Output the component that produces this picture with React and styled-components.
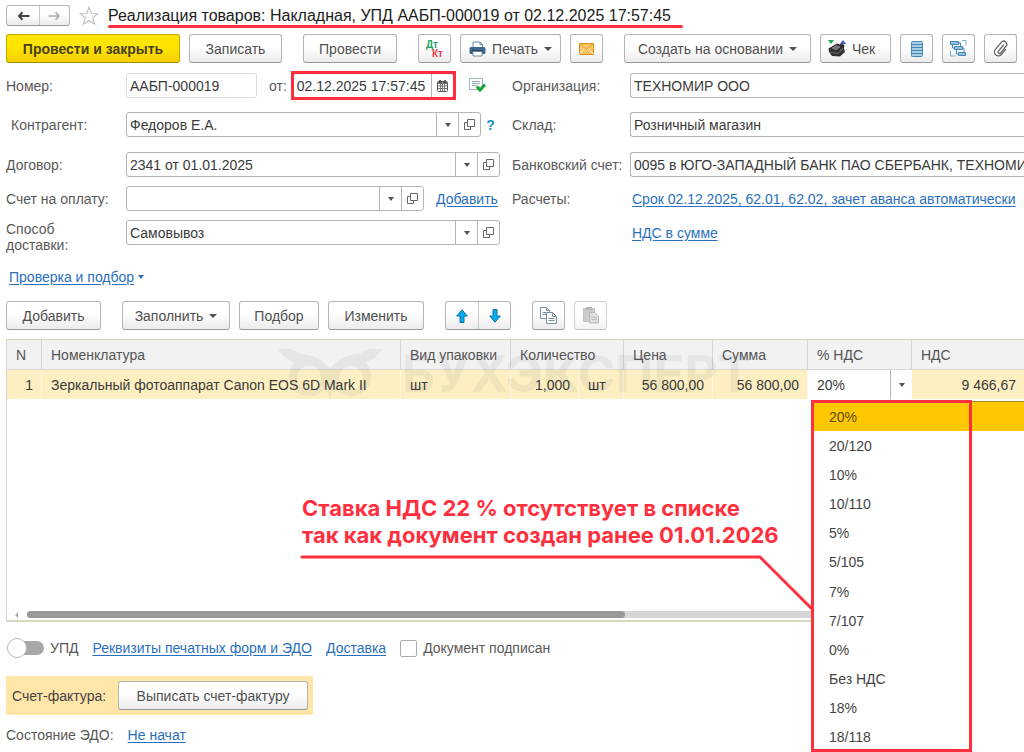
import React from "react";
import styled, { createGlobalStyle, css } from "styled-components";

const RED = "#ff2f3e";
const LINE = "#b4b4b4";
const LINK = "#2a6fbf";

const Global = createGlobalStyle`
  *, *::before, *::after { box-sizing: border-box; }
  body {
    margin: 0;
    background: #fff;
    color: #404040;
    font-family: "Liberation Sans", Arial, sans-serif;
    font-size: 14px;
    line-height: 16px;
  }
  button, input { font: inherit; color: inherit; }
`;

const Page = styled.main`
  min-height: 100vh;
  padding: 5px 0 8px 6px;
  overflow: hidden;
`;

const TitleBar = styled.header`
  display: flex;
  align-items: center;
  gap: 9px;
  height: 21px;
`;

const Title = styled.h1`
  position: relative;
  margin: 0;
  padding-right: 12px;
  color: #1c1c1c;
  font-size: 16px;
  font-weight: 400;
  line-height: 21px;
  white-space: nowrap;

  &::after {
    content: "";
    position: absolute;
    left: 0;
    right: 0;
    top: 20px;
    height: 3px;
    border-radius: 2px;
    background: ${RED};
  }
`;

const ButtonPair = styled.div`
  display: flex;
  flex: none;
  border: 1px solid ${LINE};
  border-bottom-color: #999;
  border-radius: 3px;
  background: linear-gradient(#fff 45%, #ebebeb);

  button + button { border-left: 1px solid #c8c8c8; }
`;

const PairButton = styled.button`
  display: grid;
  place-items: center;
  width: ${(p) => p.$w}px;
  height: ${(p) => p.$h}px;
  padding: 0;
  border: 0;
  background: none;
`;

const Toolbar = styled.div`
  display: flex;
  align-items: center;
  gap: 21px;
  margin-top: ${(p) => p.$top}px;
`;

const ToolGroup = styled.div`
  display: flex;
  gap: 9px;
`;

const Button = styled.button`
  display: flex;
  flex: none;
  align-items: center;
  justify-content: ${(p) => (p.$start ? "flex-start" : "center")};
  gap: 6px;
  width: ${(p) => p.$w}px;
  height: 29px;
  padding: 0 ${(p) => (p.$start ? 7 : 0)}px;
  border: 1px solid ${LINE};
  border-bottom-color: #999;
  border-radius: 3px;
  background: linear-gradient(#fff 45%, #ebebeb);
  color: #505050;
  white-space: nowrap;
  opacity: ${(p) => (p.disabled ? 0.6 : 1)};

  ${(p) =>
    p.$primary &&
    css`
      border-color: #c9a800;
      border-bottom-color: #a98d00;
      background: linear-gradient(#ffe600 40%, #f5cf00);
      color: #474020;
      font-weight: 700;
    `}
`;

const Caret = styled.span`
  border: 4px solid transparent;
  border-top-color: currentColor;
  border-bottom: 0;
`;

const SmallCaret = styled(Caret)`
  border-width: 3px;
  border-top-width: 4px;
  border-bottom: 0;
`;

const Form = styled.div`
  display: grid;
  grid-template-columns: 120px 374px 130px minmax(0, 1fr);
  grid-template-rows: 39px 40px 34px 34px 34px;
  margin-top: 10px;
`;

const Label = styled.label`
  display: flex;
  align-items: center;
  height: ${(p) => (p.$tall ? 33 : 25)}px;
  padding-left: ${(p) => p.$indent || 0}px;
  color: #595959;
  white-space: ${(p) => (p.$tall ? "normal" : "nowrap")};
`;

const Cell = styled.div`
  display: flex;
  align-items: center;
  height: 25px;
`;

const Field = styled.div`
  position: relative;
  display: flex;
  flex: ${(p) => (p.$w ? "none" : "1 1 0")};
  width: ${(p) => (p.$w ? `${p.$w}px` : "auto")};
  height: 25px;
  border: 1px solid ${(p) => (p.$soft ? "#dcdcdc" : LINE)};
  border-radius: 3px;
  background: #fff;

  ${(p) =>
    p.$open &&
    css`
      border-right: 0;
      border-radius: 3px 0 0 3px;

      input { padding-right: 0; }
    `}
`;

const Input = styled.input`
  flex: 1;
  min-width: 0;
  height: 100%;
  padding: 0 3px;
  border: 0;
  outline: 0;
  background: none;
  color: #3a3a3a;
`;

const FieldButton = styled.button`
  display: grid;
  flex: none;
  place-items: center;
  width: 22px;
  padding: 0;
  border: 0;
  border-left: 1px solid ${LINE};
  background: none;
  color: #505050;
`;

const Highlight = styled.span`
  position: absolute;
  inset: -3px;
  border: 3px solid ${RED};
  pointer-events: none;
`;

const FromLabel = styled.label`
  margin-left: 12px;
  margin-right: 6px;
  color: #595959;
`;

const Posted = styled.span`
  display: flex;
  margin-left: 15px;
`;

const Help = styled.button`
  width: 20px;
  padding: 0;
  border: 0;
  background: none;
  color: #1a93c8;
  font-weight: 700;
`;

const Link = styled.a`
  color: ${LINK};
  text-decoration: underline;
  text-underline-offset: 2px;
  white-space: nowrap;
  margin-left: ${(p) => p.$ml || 0}px;
`;

const CheckLine = styled.div`
  display: flex;
  align-items: center;
  gap: 4px;
  margin: 15px 0 0 3px;
  color: ${LINK};
`;

const TableBox = styled.section`
  position: relative;
  min-height: 283px;
  margin-top: 9px;
  border: 1px solid #d9d6c3;
  border-width: 1px 0 2px 1px;
`;

const Table = styled.table`
  width: 100%;
  border-collapse: separate;
  border-spacing: 0;
  table-layout: fixed;
`;

const Th = styled.th`
  height: 30px;
  padding: 0 8px 0 9px;
  border-right: 1px solid #d6d6d6;
  border-bottom: 1px solid #d6d6d6;
  background: #f2f2f2;
  color: #555;
  font-weight: 400;
  text-align: left;
  white-space: nowrap;

  &:last-child { border-right: 0; }
`;

const Td = styled.td`
  position: relative;
  height: 29px;
  padding: 0 8px 0 9px;
  border-right: 1px solid #fdf7e2;
  background: #fdefc1;
  color: #3a3a3a;
  text-align: ${(p) => (p.$num ? "right" : "left")};
  white-space: nowrap;

  &:last-child { border-right: 0; }
`;

const EditTd = styled(Td)`
  padding: 0;
  border: 0;
  background: #fff;
`;

const CellEditor = styled.div`
  display: flex;
  height: 29px;

  input { padding: 0 9px; }
`;

const Menu = styled.ul`
  position: absolute;
  z-index: 2;
  top: 31px;
  left: 4px;
  right: -113px;
  display: grid;
  grid-auto-rows: 1fr;
  height: 351px;
  margin: 0;
  padding: 0;
  border-left: 1px solid #aaa;
  border-top: 1px solid #a08a30;
  background: #fff;
  list-style: none;
`;

const Option = styled.li`
  display: flex;
  align-items: center;
  padding-left: 16px;
  background: ${(p) => (p["aria-selected"] ? "#ffc800" : "#fff")};
  color: ${(p) => (p["aria-selected"] ? "#5c4a10" : "#444")};
`;

const MenuFrame = styled.span`
  position: absolute;
  z-index: 3;
  top: 30px;
  left: 3px;
  width: 161px;
  height: 352px;
  border: 3px solid ${RED};
  pointer-events: none;
`;

const Watermark = styled.div`
  position: absolute;
  z-index: 1;
  top: 8px;
  left: 271px;
  display: flex;
  align-items: flex-start;
  gap: 20px;
  color: #23305a;
  font-family: Inter, sans-serif;
  font-size: 51px;
  font-weight: 700;
  line-height: 52px;
  opacity: 0.06;
  pointer-events: none;
`;

const Callout = styled.div`
  position: absolute;
  z-index: 3;
  top: 155px;
  left: 295px;
  color: ${RED};
  font-family: Inter, sans-serif;
  font-size: 22px;
  font-weight: 700;
  line-height: 27px;
  white-space: nowrap;

  p { margin: 0; }
  svg { display: block; margin-top: 6px; margin-left: -2px; }
`;

const ScrollBar = styled.div`
  position: absolute;
  left: 0;
  right: 0;
  bottom: 2px;
  display: flex;
  align-items: center;
  padding-left: 8px;
  gap: 9px;
`;

const ScrollArrow = styled.span`
  border: 3px solid transparent;
  border-right-color: #aaa;
  border-left: 0;
`;

const Track = styled.div`
  flex: 1;
  height: 7px;
  border-radius: 4px;
  background: #d6d6d6;
`;

const Thumb = styled.div`
  width: 60%;
  height: 7px;
  border-radius: 4px;
  background: #999;
`;

const OptionsLine = styled.div`
  display: flex;
  align-items: center;
  gap: 14px;
  height: 22px;
  margin-top: 15px;
`;

const CheckLabel = styled.label`
  display: flex;
  align-items: center;
  gap: 6px;
  color: #595959;
`;

const Switch = styled.input`
  position: relative;
  appearance: none;
  width: 38px;
  height: 22px;
  margin: 0;

  &::before {
    content: "";
    position: absolute;
    inset: 4px 0 4px 8px;
    border-radius: 7px;
    background: #a8a8a8;
  }
  &::after {
    content: "";
    position: absolute;
    top: 1px;
    left: 1px;
    width: 20px;
    height: 20px;
    border: 1px solid #b8b8b8;
    border-radius: 50%;
    background: #fff;
  }
`;

const Checkbox = styled.input`
  appearance: none;
  width: 17px;
  height: 17px;
  margin: 0;
  border: 1px solid #aaa;
  border-radius: 2px;
  background: #fff;
`;

const Invoice = styled.div`
  display: flex;
  align-items: center;
  gap: 12px;
  width: fit-content;
  margin-top: 17px;
  padding: 5px 5px 5px 6px;
  background: #ffe5a8;
  color: #444;
`;

const Status = styled.div`
  display: flex;
  gap: 14px;
  margin-top: 12px;
  color: #595959;
`;

/* ---------- icons ---------- */

const Arrow = ({ back }) => (
  <svg width="13" height="10" viewBox="0 0 13 10" fill="none" stroke={back ? "#444" : "#aaa"} strokeWidth={back ? 2 : 1.6}>
    <path d={back ? "M12.500 5H2M5.500 1.300L2 5l3.500 3.700" : "M.5 5H11M7.500 1.300L11 5 7.500 8.700"} />
  </svg>
);

const Star = () => (
  <svg width="20" height="20" viewBox="0 0 20 20" fill="#fff" stroke="#b9bec6" strokeWidth="1.1">
    <path d="M10 1.200l2.300 6.300 6.700.2-5.300 4.100 1.900 6.500L10 14.500l-5.600 3.800 1.900-6.500L1 7.700l6.700-.2z" />
  </svg>
);

const DtKt = () => (
  <svg width="20" height="18" viewBox="0 0 20 18" fontFamily="Liberation Sans, sans-serif" fontWeight="700" fontSize="10">
    <text x="1" y="8" fill="#1ba35f">Дт</text>
    <text x="7" y="17" fill="#ee3f4c">Кт</text>
  </svg>
);

const Printer = () => (
  <svg width="17" height="16" viewBox="0 0 17 16">
    <path d="M4 6V1h7l2.500 2.500V6" fill="#fff" stroke="#6d8ba5" />
    <path d="M11 1v2.500h2.500" fill="none" stroke="#6d8ba5" />
    <rect x="0.500" y="6" width="16" height="7" rx="1.500" fill="#41688a" />
    <path d="M3 9.500h11" stroke="#24435e" />
    <path d="M4 10.500h9V15H4z" fill="#fff" stroke="#6d8ba5" />
  </svg>
);

const Mail = () => (
  <svg width="15" height="12" viewBox="0 0 15 12" fill="#fbc45c" stroke="#d98d1c">
    <rect x="0.500" y="0.500" width="14" height="11" />
    <path d="M.5.5l7 6.500 7-6.500M.5 11.500l5-6M14.500 11.500l-5-6" fill="none" stroke="#fff3d6" />
    <path d="M.5.5l7 6 7-6" fill="none" />
  </svg>
);

const CashRegister = () => (
  <svg width="18" height="17" viewBox="0 0 18 17">
    <path d="M0 0h6L3 4z" fill="#22a85a" />
    <path d="M12 4h6l-3-4z" fill="#4a56c8" />
    <path d="M3 7l6-3.500 3 1 1-1 3.500 1.500-.5 3 1 4-5 4.500-8-.5L1 12 .500 8.500z" fill="#303030" />
    <path d="M4 8l4.500-2.500L12 7l-4 3zM12 10l4-2" fill="#777" stroke="#8a8a8a" strokeWidth=".6" />
    <path d="M2 12l7 1.500 6-4" fill="none" stroke="#6b6b6b" />
  </svg>
);

const Register = () => (
  <svg width="12" height="16" viewBox="0 0 12 16" fill="#a9cfe6" stroke="#4686b3">
    <rect x="0.500" y="0.500" width="11" height="15" rx="1" />
    <path d="M1 3.500h10M1 6.500h10M1 9.500h10M1 12.500h10" />
  </svg>
);

const Structure = () => (
  <svg width="17" height="17" viewBox="0 0 17 17" fill="#8fc1de" stroke="#4686b3">
    <path d="M.5 1.500h8v3h-8zM4.500 6.500h8v3h-8zM8.500 12.500h7v3h-7z" />
    <path d="M2.500 4.500V8h2M8.500 3h2v3.500M6.500 9.500V14h2M12.500 8h1.500v4.500" fill="none" />
    <path d="M12 .5h4v5M.5 11v5h5" fill="none" stroke="#7fb0d0" />
  </svg>
);

const Clip = () => (
  <svg width="15" height="17" viewBox="0 0 15 17" fill="none" stroke="#666" strokeWidth="1.300" strokeLinecap="round">
    <path d="M10.500 5l-5 6.200a1.400 1.400 0 0 0 2.200 1.800l5.300-6.800a3 3 0 0 0-4.700-3.900L2.400 9.300a4 4 0 0 0 6.200 5.100l4-5" />
  </svg>
);

const Calendar = () => (
  <svg width="11" height="12" viewBox="0 0 11 12">
    <rect x="0.500" y="1.500" width="10" height="10" rx="1" fill="#fff" stroke="#555" />
    <path d="M1 3h9M3 0v3M8 0v3" stroke="#444" strokeWidth="1.600" />
    <path d="M1 6h9M1 8.500h9M3.500 4v7M5.500 4v7M7.500 4v7" stroke="#777" />
  </svg>
);

const PostedIcon = () => (
  <svg width="17" height="15" viewBox="0 0 17 15">
    <rect x="0.500" y="0.500" width="13" height="11" fill="#fff" stroke="#9fb3c2" />
    <path d="M3 3.500h8M3 5.500h8M3 7.500h5" stroke="#8fa9bb" />
    <path d="M8 8.500l3 3.500 5-5.500" fill="none" stroke="#14a532" strokeWidth="3" />
  </svg>
);

const OpenIcon = () => (
  <svg width="11" height="11" viewBox="0 0 11 11" fill="none" stroke="#666">
    <path d="M3.500.5h7v7h-7z" />
    <path d="M3.500 3.500h-3v7h6v-3" />
  </svg>
);

const Move = ({ down }) => (
  <svg width="12" height="14" viewBox="0 0 12 14" fill="#00aeef" stroke="#1471a3">
    <path d={down ? "M4 .5h4v6.500h3.300L6 13.200.700 7H4z" : "M4 13.500h4V7h3.300L6 .8.700 7H4z"} />
  </svg>
);

const CopyIcon = () => (
  <svg width="17" height="17" viewBox="0 0 17 17" fill="#fff" stroke="#7890a2">
    <path d="M.5.5h6l3 3v8h-9z" />
    <path d="M6.500.5v3h3M2.500 5.500h4M2.500 7.500h4" fill="none" />
    <path d="M6.500 5.500h6l4 4v7h-10z" />
    <path d="M12.500 5.500v4h4M8.500 11.500h6M8.500 13.500h6" fill="none" />
  </svg>
);

const PasteIcon = () => (
  <svg width="16" height="17" viewBox="0 0 16 17">
    <path d="M.5 1.500h11v13H.5z" fill="#aaa" stroke="#999" />
    <path d="M3 0h6v3H3z" fill="#888" />
    <path d="M6.500 5.500h5l4 3.500v7h-9z" fill="#c9c9c9" stroke="#8a8a8a" />
    <path d="M8 10.500h6M8 12.500h6" stroke="#999" />
  </svg>
);

const Owl = () => (
  <svg width="104" height="53" viewBox="0 0 104 53" fill="currentColor">
    <path
      fillRule="evenodd"
      d="M0 1h11c5 0 8 3 12 5 12 1 22 5 29 15C59 11 69 7 81 6c4-2 7-5 12-5h11c-4 7-9 11-16 13 3 4 5 9 5 15 0 10-8 19-20 19-8 0-14-4-17-9-2 4-3 9-4 14-1-5-2-10-4-14-3 5-9 9-17 9-12 0-20-9-20-19 0-6 2-11 5-15C9 12 4 8 0 1zM31 18a12 12 0 1 0 0 24 12 12 0 0 0 0-24zM73 18a12 12 0 1 0 0 24 12 12 0 0 0 0-24z"
    />
  </svg>
);

/* ---------- parts ---------- */

const Picker = ({ id, value, w }) => (
  <Field $w={w}>
    <Input id={id} defaultValue={value} />
    <FieldButton aria-label="Выбрать"><SmallCaret /></FieldButton>
    <FieldButton aria-label="Открыть"><OpenIcon /></FieldButton>
  </Field>
);

const COLUMNS = [35, 359, 110, 68, 45, 89, 95, 104];
const RATES = ["20%", "20/120", "10%", "10/110", "5%", "5/105", "7%", "7/107", "0%", "Без НДС", "18%", "18/118"];

export default function App() {
  return (
    <Page>
      <Global />
      <TitleBar>
        <ButtonPair>
          <PairButton $w={32} $h={19} aria-label="Назад"><Arrow back /></PairButton>
          <PairButton $w={30} $h={19} aria-label="Вперед"><Arrow /></PairButton>
        </ButtonPair>
        <Star />
        <Title>Реализация товаров: Накладная, УПД ААБП-000019 от 02.12.2025 17:57:45</Title>
      </TitleBar>

      <Toolbar $top={8}>
        <ToolGroup>
          <Button $primary $w={174}>Провести и закрыть</Button>
          <Button $w={93}>Записать</Button>
        </ToolGroup>
        <Button $w={94}>Провести</Button>
        <ToolGroup>
          <Button $w={33} aria-label="Движения"><DtKt /></Button>
          <Button $w={101}><Printer />Печать<Caret /></Button>
          <Button $w={33} aria-label="Отправить"><Mail /></Button>
        </ToolGroup>
        <ToolGroup>
          <Button $w={187}>Создать на основании<Caret /></Button>
          <Button $w={71} $start><CashRegister />Чек</Button>
          <Button $w={33} aria-label="Реестр"><Register /></Button>
          <Button $w={33} aria-label="Структура"><Structure /></Button>
          <Button $w={33} aria-label="Файлы"><Clip /></Button>
        </ToolGroup>
      </Toolbar>

      <Form>
        <Label htmlFor="num">Номер:</Label>
        <Cell>
          <Field $w={131} $soft><Input id="num" defaultValue="ААБП-000019" /></Field>
          <FromLabel htmlFor="date">от:</FromLabel>
          <Field $w={161}>
            <Input id="date" defaultValue="02.12.2025 17:57:45" />
            <FieldButton aria-label="Календарь"><Calendar /></FieldButton>
            <Highlight />
          </Field>
          <Posted><PostedIcon /></Posted>
        </Cell>
        <Label htmlFor="org" $indent={12}>Организация:</Label>
        <Cell><Field $open><Input id="org" defaultValue="ТЕХНОМИР ООО" /></Field></Cell>

        <Label htmlFor="partner" $indent={5}>Контрагент:</Label>
        <Cell><Picker id="partner" value="Федоров Е.А." w={355} /><Help aria-label="Справка">?</Help></Cell>
        <Label htmlFor="store" $indent={12}>Склад:</Label>
        <Cell><Field $open><Input id="store" defaultValue="Розничный магазин" /></Field></Cell>

        <Label htmlFor="contract">Договор:</Label>
        <Cell><Picker id="contract" value="2341 от 01.01.2025" /></Cell>
        <Label htmlFor="bank" $indent={12}>Банковский счет:</Label>
        <Cell><Field $open><Input id="bank" defaultValue="0095 в ЮГО-ЗАПАДНЫЙ БАНК ПАО СБЕРБАНК, ТЕХНОМИР ООО" /></Field></Cell>

        <Label htmlFor="bill">Счет на оплату:</Label>
        <Cell><Picker id="bill" value="" w={298} /><Link href="#add" $ml={12}>Добавить</Link></Cell>
        <Label as="span" $indent={12}>Расчеты:</Label>
        <Cell><Link href="#terms" $ml={2}>Срок 02.12.2025, 62.01, 62.02, зачет аванса автоматически</Link></Cell>

        <Label htmlFor="delivery" $tall>Способ<br />доставки:</Label>
        <Cell><Picker id="delivery" value="Самовывоз" /></Cell>
        <span />
        <Cell><Link href="#vat" $ml={2}>НДС в сумме</Link></Cell>
      </Form>

      <CheckLine><Link href="#check">Проверка и подбор</Link><SmallCaret /></CheckLine>

      <Toolbar $top={16}>
        <Button $w={95}>Добавить</Button>
        <ToolGroup>
          <Button $w={108}>Заполнить<Caret /></Button>
          <Button $w={80}>Подбор</Button>
          <Button $w={96}>Изменить</Button>
        </ToolGroup>
        <ButtonPair>
          <PairButton $w={32} $h={27} aria-label="Вверх"><Move /></PairButton>
          <PairButton $w={32} $h={27} aria-label="Вниз"><Move down /></PairButton>
        </ButtonPair>
        <ToolGroup>
          <Button $w={33} aria-label="Копировать"><CopyIcon /></Button>
          <Button $w={33} aria-label="Вставить" disabled><PasteIcon /></Button>
        </ToolGroup>
      </Toolbar>

      <TableBox>
        <Table>
          <colgroup>
            {COLUMNS.map((w, i) => <col key={i} width={w} />)}
            <col />
          </colgroup>
          <thead>
            <tr>
              <Th>N</Th>
              <Th>Номенклатура</Th>
              <Th>Вид упаковки</Th>
              <Th colSpan={2}>Количество</Th>
              <Th>Цена</Th>
              <Th>Сумма</Th>
              <Th>% НДС</Th>
              <Th>НДС</Th>
            </tr>
          </thead>
          <tbody>
            <tr>
              <Td $num>1</Td>
              <Td>Зеркальный фотоаппарат Canon EOS 6D Mark II</Td>
              <Td>шт</Td>
              <Td $num>1,000</Td>
              <Td>шт</Td>
              <Td $num>56 800,00</Td>
              <Td $num>56 800,00</Td>
              <EditTd>
                <CellEditor>
                  <Input aria-label="% НДС" defaultValue="20%" />
                  <FieldButton aria-label="Список ставок"><SmallCaret /></FieldButton>
                </CellEditor>
                <Menu role="listbox" aria-label="Ставка НДС">
                  {RATES.map((rate, i) => (
                    <Option key={rate} role="option" aria-selected={i === 0}>{rate}</Option>
                  ))}
                </Menu>
                <MenuFrame />
              </EditTd>
              <Td $num>9 466,67</Td>
            </tr>
          </tbody>
        </Table>
        <Watermark aria-hidden="true"><Owl />БУХЭКСПЕРТ</Watermark>
        <Callout>
          <p>Ставка НДС 22 % отсутствует в списке</p>
          <p>так как документ создан ранее 01.01.2026</p>
          <svg width="514" height="58" viewBox="0 0 514 58" fill="none" stroke={RED} strokeWidth="3" strokeLinecap="round">
            <path d="M2 2h458l51 51" />
          </svg>
        </Callout>
        <ScrollBar><ScrollArrow /><Track><Thumb /></Track></ScrollBar>
      </TableBox>

      <OptionsLine>
        <CheckLabel><Switch type="checkbox" role="switch" />УПД</CheckLabel>
        <Link href="#details">Реквизиты печатных форм и ЭДО</Link>
        <Link href="#shipping">Доставка</Link>
        <CheckLabel><Checkbox type="checkbox" />Документ подписан</CheckLabel>
      </OptionsLine>

      <Invoice>
        <span>Счет-фактура:</span>
        <Button $w={190}>Выписать счет-фактуру</Button>
      </Invoice>

      <Status><span>Состояние ЭДО:</span><Link href="#edo">Не начат</Link></Status>
    </Page>
  );
}
